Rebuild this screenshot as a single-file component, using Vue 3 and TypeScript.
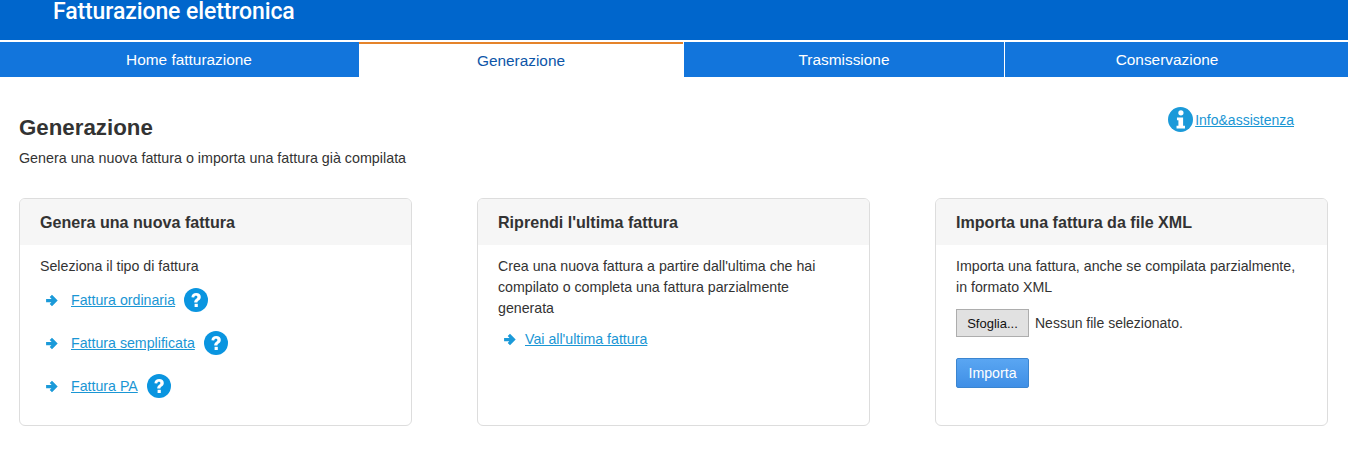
<template>
  <div class="page">
    <header class="top">
      <span class="brand">Fatturazione elettronica</span>
    </header>
    <nav class="tabs">
      <a
        v-for="t in tabs"
        :key="t.label"
        class="tab"
        :class="{ active: t.active }"
        :style="{ width: t.width + 'px' }"
      >{{ t.label }}</a>
    </nav>

    <main class="content">
      <div class="intro">
        <div>
          <h1>Generazione</h1>
          <p class="lead">Genera una nuova fattura o importa una fattura già compilata</p>
        </div>
        <a class="info">
          <svg class="info-icon" viewBox="0 0 24 24" width="25" height="25">
            <circle cx="12" cy="12" r="12" fill="#1b9ad9" />
            <circle cx="12.4" cy="5.6" r="2.5" fill="#fff" />
            <path d="M8.6 10h5.9v8h1.8v2.6H8.2V18H10v-5.4H8.6z" fill="#fff" />
          </svg>
          <span class="link info-link">Info&amp;assistenza</span>
        </a>
      </div>

      <div class="cards">
        <section class="card">
          <h2>Genera una nuova fattura</h2>
          <div class="body">
            <p>Seleziona il tipo di fattura</p>
            <ul class="types">
              <li v-for="f in fatture" :key="f">
                <svg class="arrow" viewBox="0 0 12 12" width="13" height="13">
                  <path d="M1 6h8M5.400 1.800l4.200 4.200-4.200 4.200" fill="none" stroke="#1b9ad9" stroke-width="3" />
                </svg>
                <a class="link">{{ f }}</a>
                <svg class="help" viewBox="0 0 24 24" width="24" height="24">
                  <circle cx="12" cy="12" r="12" fill="#0a95e0" />
                  <path d="M7.400 9.300c.3-2.800 2.200-4.200 4.800-4.200 2.800 0 4.600 1.600 4.600 3.900 0 1.900-1.100 2.800-2.200 3.600-.9.600-1.200 1.100-1.200 2h-3.200c0-1.900.6-2.800 1.700-3.600 1-.7 1.500-1.200 1.500-1.900 0-.8-.7-1.300-1.500-1.300-1 0-1.500.6-1.700 1.800z" fill="#fff" />
                  <rect x="10.600" y="15.800" width="3.200" height="3.200" fill="#fff" />
                </svg>
              </li>
            </ul>
          </div>
        </section>

        <section class="card">
          <h2>Riprendi l'ultima fattura</h2>
          <div class="body">
            <p>Crea una nuova fattura a partire dall'ultima che hai compilato o completa una fattura parzialmente generata</p>
            <div class="last">
              <svg class="arrow" viewBox="0 0 12 12" width="13" height="13">
                <path d="M1 6h8M5.400 1.800l4.200 4.200-4.200 4.200" fill="none" stroke="#1b9ad9" stroke-width="3" />
              </svg>
              <a class="link">Vai all'ultima fattura</a>
            </div>
          </div>
        </section>

        <section class="card">
          <h2>Importa una fattura da file XML</h2>
          <div class="body">
            <p>Importa una fattura, anche se compilata parzialmente, in formato XML</p>
            <div class="file">
              <button class="browse" type="button">Sfoglia...</button>
              <span class="file-name">Nessun file selezionato.</span>
            </div>
            <button class="submit" type="button">Importa</button>
          </div>
        </section>
      </div>
    </main>
  </div>
</template>

<script setup lang="ts">
const tabs = [
  { label: 'Home fatturazione', width: 359, active: false },
  { label: 'Generazione', width: 324, active: true },
  { label: 'Trasmissione', width: 321, active: false },
  { label: 'Conservazione', width: 344, active: false },
]

const fatture = ['Fattura ordinaria', 'Fattura semplificata', 'Fattura PA']
</script>

<style>
html, body {
  margin: 0;
  background: #fff;
  overflow: hidden;
}
</style>

<style scoped>
.page {
  width: 1350px;
  height: 460px;
  font-family: "Liberation Sans", Arial, sans-serif;
  font-size: 14.2px;
  color: #333;
  overflow: hidden;
}

.top {
  width: 1348px;
  height: 40px;
  background: #0066cc;
  padding-left: 53px;
  box-sizing: border-box;
}

.brand {
  display: block;
  font-family: Roboto, sans-serif;
  font-size: 23px;
  font-weight: 500;
  letter-spacing: -0.1px;
  line-height: 23px;
  color: #fff;
}

.tabs {
  display: flex;
  width: 1348px;
  margin-top: 2px;
  height: 35px;
  background: #1275dc;
}

.tab {
  box-sizing: border-box;
  display: flex;
  align-items: center;
  justify-content: center;
  color: #fff;
  font-size: 15.4px;
  border-left: 1px solid #fff;
}

.tab:first-child {
  border-left: 0;
  padding-left: 19px;
}

.tab:last-child {
  padding-right: 19px;
}

.tab.active {
  background: #fff;
  color: #0d56a8;
  border-left: 0;
  border-top: 2px solid #e5832a;
}

.content {
  padding: 0 22px 0 19px;
}

.intro {
  display: flex;
  justify-content: space-between;
  align-items: flex-start;
  height: 121px;
}

h1 {
  margin: 38px 0 0;
  font-size: 22.3px;
  line-height: 26px;
  font-weight: 700;
  color: #333;
}

.lead {
  margin: 8px 0 0;
  font-size: 14.3px;
  line-height: 18px;
}

.info {
  display: flex;
  align-items: center;
  gap: 2px;
  margin: 30px 34px 0 0;
}

.link {
  color: #1a96d4;
  text-decoration: underline;
  font-size: 14.2px;
}

.info-link {
  font-size: 14px;
}

.cards {
  display: flex;
  justify-content: space-between;
}

.card {
  box-sizing: border-box;
  width: 393px;
  height: 228px;
  border: 1px solid #ddd;
  border-radius: 6px;
  overflow: hidden;
}

h2 {
  margin: 0;
  height: 46px;
  padding-left: 20px;
  background: #f6f6f6;
  font-size: 16.1px;
  font-weight: 700;
  line-height: 47px;
  color: #333;
}

.body {
  padding: 11px 25px 0 20px;
}

p {
  margin: 0;
  line-height: 21px;
}

.types {
  list-style: none;
  margin: 11px 0 0;
  padding: 0;
}

.types li {
  display: flex;
  align-items: center;
  height: 24px;
  margin-bottom: 19px;
}

.arrow {
  margin: 0 13px 0 5px;
  flex: none;
}

.help {
  margin-left: 9px;
}

.last {
  display: flex;
  align-items: center;
  margin-top: 12px;
}

.last .arrow {
  margin-right: 9px;
}

.file {
  display: flex;
  align-items: center;
  gap: 6px;
  margin-top: 11px;
}

.file-name {
  font-size: 14px;
}

.browse {
  box-sizing: border-box;
  width: 73px;
  height: 28px;
  padding: 0;
  background: #e1e1e1;
  border: 1px solid #adadad;
  font: 13px "Liberation Sans", Arial, sans-serif;
  color: #111;
}

.submit {
  box-sizing: border-box;
  display: block;
  width: 73px;
  height: 30px;
  margin-top: 21px;
  padding: 0;
  border: 1px solid #3b85d0;
  border-radius: 2px;
  background: linear-gradient(#5aa6f2, #3f8fe6);
  color: #fff;
  font: 14.2px "Liberation Sans", Arial, sans-serif;
}
</style>
